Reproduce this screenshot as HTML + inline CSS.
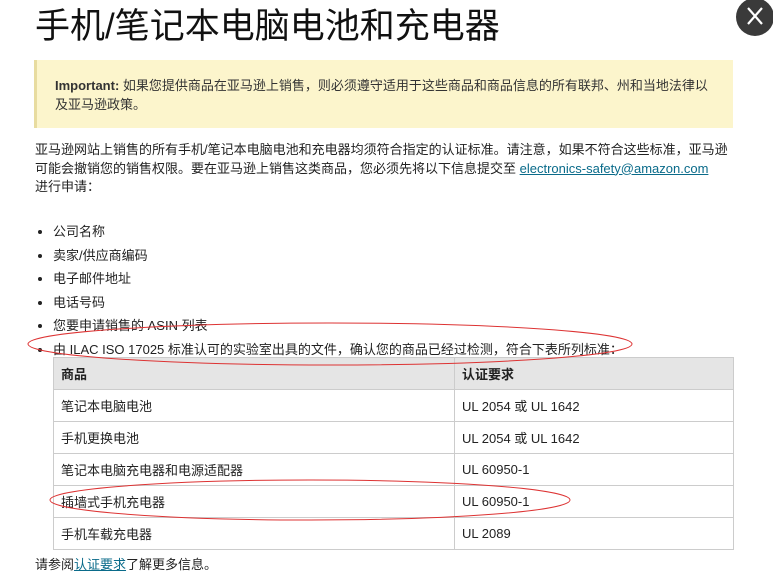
<!DOCTYPE html>
<html><head><meta charset="utf-8"><style>
body{margin:0;width:773px;height:571px;overflow:hidden;background:#fff;font-family:"Liberation Sans","Noto Sans CJK SC",sans-serif;color:#111;position:relative}
.t{position:absolute;left:35px;top:3px;font-size:35px;line-height:48px;color:#111}
.x{position:absolute;left:736px;top:-2px;width:38px;height:38px;border-radius:50%;background:#3a3a3a}
.y{position:absolute;left:34px;top:60px;width:699px;height:68px;background:#fcf5cc;border-left:3px solid #e8dca0;box-sizing:border-box;padding:16px 18px;font-size:13px;line-height:19px;color:#333}
.p{position:absolute;left:35px;top:141px;width:740px;white-space:nowrap;font-size:13px;line-height:18.5px;color:#222}
a{color:#0a6b8a}
ul{position:absolute;left:35px;top:222px;margin:0;padding:0 0 0 18px;font-size:13px;color:#222}
li{height:23.5px;line-height:20px}
table{position:absolute;left:53px;top:357px;width:681px;border-collapse:collapse;font-size:13px;color:#222}
td,th{border:1px solid #ccc;height:31px;padding:0 7px;text-align:left}
th{background:#e5e5e5;font-weight:bold}
.f{position:absolute;left:35px;top:554px;font-size:13px;color:#222}
</style></head><body>
<div class="t">手机/笔记本电脑电池和充电器</div>
<div class="x"><svg width="38" height="38"><path d="M12 10L26 26M26 10L12 26" stroke="#fff" stroke-width="2.2"/></svg></div>
<div class="y"><b>Important:</b> 如果您提供商品在亚马逊上销售，则必须遵守适用于这些商品和商品信息的所有联邦、州和当地法律以及亚马逊政策。</div>
<div class="p">亚马逊网站上销售的所有手机/笔记本电脑电池和充电器均须符合指定的认证标准。请注意，如果不符合这些标准，亚马逊<br>可能会撤销您的销售权限。要在亚马逊上销售这类商品，您必须先将以下信息提交至 <a href="#">electronics-safety@amazon.com</a><br>进行申请：</div>
<ul><li>公司名称</li><li>卖家/供应商编码</li><li>电子邮件地址</li><li>电话号码</li><li>您要申请销售的 ASIN 列表</li><li>由 ILAC ISO 17025 标准认可的实验室出具的文件，确认您的商品已经过检测，符合下表所列标准：</li></ul>
<table><tr><th style="width:386px">商品</th><th>认证要求</th></tr>
<tr><td>笔记本电脑电池</td><td>UL 2054 或 UL 1642</td></tr>
<tr><td>手机更换电池</td><td>UL 2054 或 UL 1642</td></tr>
<tr><td>笔记本电脑充电器和电源适配器</td><td>UL 60950-1</td></tr>
<tr><td>插墙式手机充电器</td><td>UL 60950-1</td></tr>
<tr><td>手机车载充电器</td><td>UL 2089</td></tr></table>
<div class="f">请参阅<a href="#">认证要求</a>了解更多信息。</div>
<svg style="position:absolute;left:0;top:0" width="773" height="571"><ellipse cx="330" cy="344" rx="302" ry="21" fill="none" stroke="#d33" stroke-width="1"/><ellipse cx="310" cy="500" rx="260" ry="20" fill="none" stroke="#d33" stroke-width="1"/></svg>
</body></html>
